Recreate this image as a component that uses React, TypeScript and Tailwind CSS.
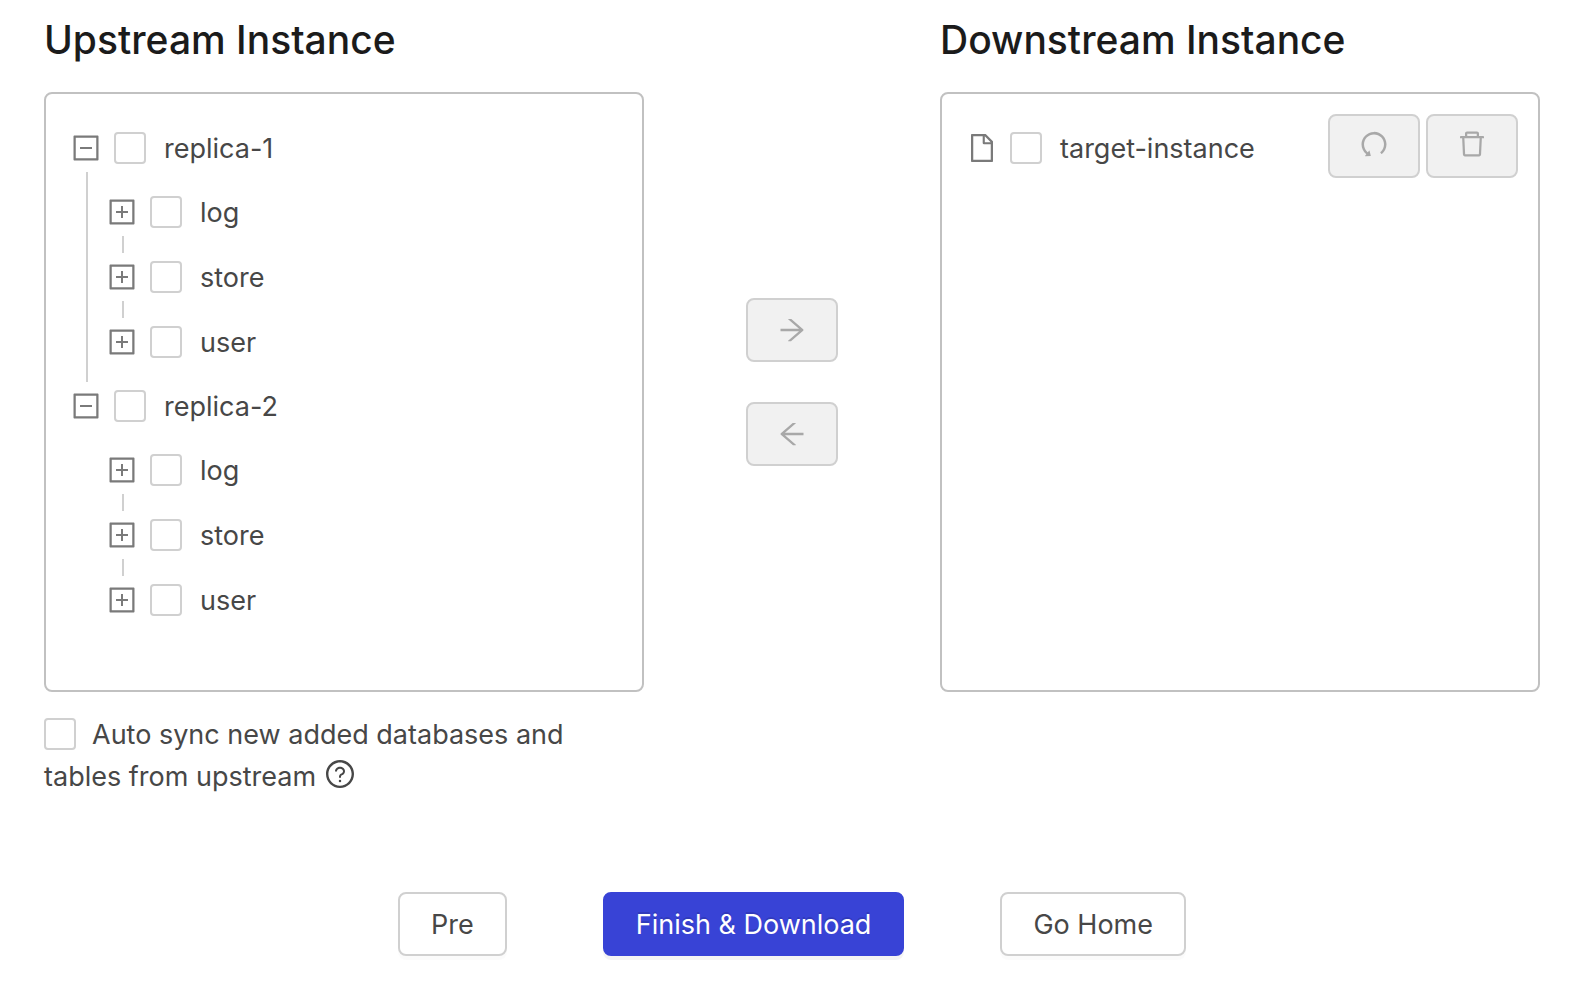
import { useId, type ReactNode } from "react";
import {
  AiOutlineArrowLeft,
  AiOutlineArrowRight,
  AiOutlineDelete,
  AiOutlineFile,
  AiOutlineMinusSquare,
  AiOutlinePlusSquare,
  AiOutlineQuestionCircle,
  AiOutlineUndo,
} from "react-icons/ai";

type Replica = { name: string; databases: string[] };

const replicas: Replica[] = [
  { name: "replica-1", databases: ["log", "store", "user"] },
  { name: "replica-2", databases: ["log", "store", "user"] },
];

const checkboxClass =
  "size-8 shrink-0 appearance-none rounded-sm border-2 border-[#d0d0d0] bg-white checked:bg-[#3843d6]";

function TreeRow({ name, icon }: { name: string; icon: ReactNode }) {
  const id = useId();
  return (
    <div className="flex h-12 items-center">
      {icon}
      <input id={id} type="checkbox" className={`${checkboxClass} ml-3`} />
      <label htmlFor={id} className="pt-0.5 pl-[18px]">
        {name}
      </label>
    </div>
  );
}

function Toggle({ name, open }: { name: string; open: boolean }) {
  return (
    <button
      type="button"
      aria-expanded={open}
      aria-label={name}
      className="text-[32px] text-[#7a7a7a]"
    >
      {open ? <AiOutlineMinusSquare /> : <AiOutlinePlusSquare />}
    </button>
  );
}

function ReplicaNode({ replica, last }: { replica: Replica; last: boolean }) {
  return (
    <li>
      <TreeRow name={replica.name} icon={<Toggle name={replica.name} open />} />
      <div className="flex">
        <div className="flex w-9 shrink-0 pl-4">
          {!last && <div className="w-0.5 bg-[#d0d0d0]" />}
        </div>
        <ul className="py-4">
          {replica.databases.map((db, i) => (
            <li key={db}>
              {i > 0 && <div className="ml-4 h-[17px] w-0.5 bg-[#d0d0d0]" />}
              <TreeRow name={db} icon={<Toggle name={db} open={false} />} />
            </li>
          ))}
        </ul>
      </div>
    </li>
  );
}

function IconButton({
  label,
  raised = false,
  children,
}: {
  label: string;
  raised?: boolean;
  children: ReactNode;
}) {
  return (
    <button
      type="button"
      disabled
      aria-label={label}
      className={`flex h-16 w-[92px] items-center justify-center rounded-lg border-2 border-[#d0d0d0] bg-[#f1f1f1] text-[32px] text-[#a8a8a8] ${
        raised ? "pb-1" : ""
      }`}
    >
      {children}
    </button>
  );
}

function Panel({ children }: { children: ReactNode }) {
  return (
    <div className="min-h-[600px] rounded-lg border-2 border-[#c1c1c1] p-5">
      {children}
    </div>
  );
}

const headingClass = "pb-6 text-[39px] leading-14 font-medium text-[#1b1b1b]";
const actionClass = "h-16 rounded-lg border-2 px-[31px] pt-0.5";

export default function App() {
  return (
    <main className="min-h-screen bg-white pt-3 pr-[50px] pb-10 pl-11 font-['Inter',sans-serif] text-[27px] leading-[42px] text-[#474747]">
      <div className="grid grid-cols-[600fr_296fr_600fr]">
        <h2 className={headingClass}>Upstream Instance</h2>
        <h2 className={`${headingClass} col-start-3`}>Downstream Instance</h2>

        <Panel>
          <ul className="pt-2.5 pl-1">
            {replicas.map((replica, i) => (
              <ReplicaNode
                key={replica.name}
                replica={replica}
                last={i === replicas.length - 1}
              />
            ))}
          </ul>
        </Panel>

        <div className="flex flex-col items-center justify-center gap-10 pb-5">
          <IconButton label="Move to downstream">
            <AiOutlineArrowRight />
          </IconButton>
          <IconButton label="Move to upstream">
            <AiOutlineArrowLeft />
          </IconButton>
        </div>

        <Panel>
          <div className="flex items-start justify-between">
            <div className="pt-2.5 pl-1">
              <TreeRow
                name="target-instance"
                icon={<AiOutlineFile className="text-[32px] text-[#7a7a7a]" />}
              />
            </div>
            <div className="flex gap-1.5">
              <IconButton label="Reset" raised>
                <AiOutlineUndo />
              </IconButton>
              <IconButton label="Delete" raised>
                <AiOutlineDelete />
              </IconButton>
            </div>
          </div>
        </Panel>

        <div className="pt-[22px]">
          <input
            id="auto-sync"
            type="checkbox"
            className={`${checkboxClass} mr-4 inline-block align-[-6px]`}
          />
          <label htmlFor="auto-sync">
            Auto sync new added databases and tables from upstream
          </label>
          <button
            type="button"
            aria-label="Help"
            className="ml-2 align-[-4px] text-[32px]"
          >
            <AiOutlineQuestionCircle />
          </button>
        </div>
      </div>

      <div className="flex justify-center gap-24 pt-[94px]">
        <button
          type="button"
          className={`${actionClass} border-[#d0d0d0] bg-white shadow-[0_4px_0_rgba(0,0,0,0.016)]`}
        >
          Pre
        </button>
        <button
          type="button"
          className={`${actionClass} border-[#3843d6] bg-[#3843d6] text-white shadow-[0_4px_0_rgba(0,0,0,0.045)] text-shadow-[0_-2px_0_rgba(0,0,0,0.12)]`}
        >
          Finish &amp; Download
        </button>
        <button
          type="button"
          className={`${actionClass} border-[#d0d0d0] bg-white shadow-[0_4px_0_rgba(0,0,0,0.016)]`}
        >
          Go Home
        </button>
      </div>
    </main>
  );
}
